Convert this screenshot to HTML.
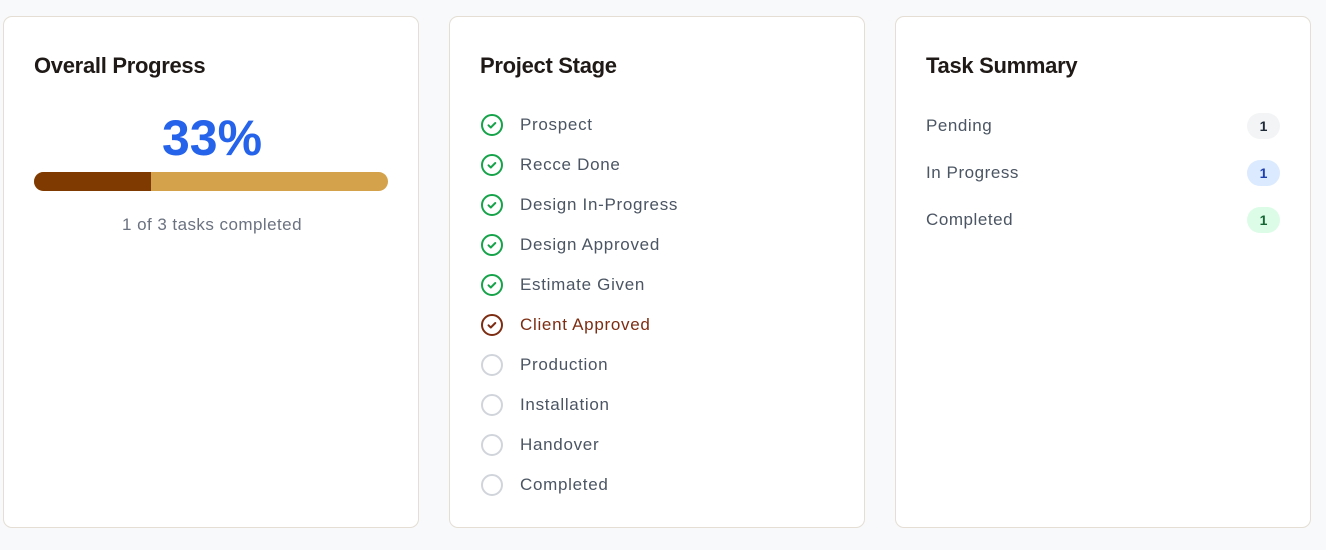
<!DOCTYPE html>
<html><head><style>
body{margin:0;width:1326px;height:550px;background:#f8f9fb;font-family:"Liberation Sans",sans-serif;position:relative;overflow:hidden}
.card{position:absolute;top:16px;width:416px;height:512px;background:#fff;border:1px solid #e4ded4;border-radius:9px;box-sizing:border-box}
.t{position:absolute;left:30px;top:36px;font-size:22px;font-weight:600;color:#1f1a17;letter-spacing:-0.3px}
.pct{position:absolute;left:0;width:416px;top:92px;text-align:center;font-size:50px;font-weight:700;color:#2563eb}
.bar{position:absolute;left:30px;top:155px;width:354px;height:19px;border-radius:10px;background:#d4a24a;overflow:hidden}
.bar div{width:117px;height:100%;background:#7f3a02}
.sub{position:absolute;left:0;width:416px;top:198px;text-align:center;font-size:17px;color:#6b7280;letter-spacing:0.45px}
.row{position:absolute;left:30px;height:24px;display:flex;align-items:center;font-size:17px;color:#4b5563;letter-spacing:0.7px}
.row svg{margin-right:16px}
.tr{position:absolute;left:30px;right:30px;display:flex;justify-content:space-between;align-items:center;font-size:17px;color:#4b5563;letter-spacing:0.55px}
.b{width:33px;height:26px;border-radius:13px;display:flex;align-items:center;justify-content:center;font-size:14px;font-weight:700;letter-spacing:0}
</style></head><body>
<div class="card" style="left:3px">
<div class="t">Overall Progress</div>
<div class="pct">33%</div>
<div class="bar"><div></div></div>
<div class="sub">1 of 3 tasks completed</div>
</div>
<div class="card" style="left:449px">
<div class="t">Project Stage</div>
<div class="row" style="top:96px"><svg width="24" height="24" viewBox="0 0 24 24"><circle cx="12" cy="12" r="10" fill="none" stroke="#16a34a" stroke-width="2"/><path d="M8.5 12.3l2.3 2.2 4.5-4.5" fill="none" stroke="#16a34a" stroke-width="2" stroke-linecap="round" stroke-linejoin="round"/></svg>Prospect</div>
<div class="row" style="top:136px"><svg width="24" height="24" viewBox="0 0 24 24"><circle cx="12" cy="12" r="10" fill="none" stroke="#16a34a" stroke-width="2"/><path d="M8.5 12.3l2.3 2.2 4.5-4.5" fill="none" stroke="#16a34a" stroke-width="2" stroke-linecap="round" stroke-linejoin="round"/></svg>Recce Done</div>
<div class="row" style="top:176px"><svg width="24" height="24" viewBox="0 0 24 24"><circle cx="12" cy="12" r="10" fill="none" stroke="#16a34a" stroke-width="2"/><path d="M8.5 12.3l2.3 2.2 4.5-4.5" fill="none" stroke="#16a34a" stroke-width="2" stroke-linecap="round" stroke-linejoin="round"/></svg>Design In-Progress</div>
<div class="row" style="top:216px"><svg width="24" height="24" viewBox="0 0 24 24"><circle cx="12" cy="12" r="10" fill="none" stroke="#16a34a" stroke-width="2"/><path d="M8.5 12.3l2.3 2.2 4.5-4.5" fill="none" stroke="#16a34a" stroke-width="2" stroke-linecap="round" stroke-linejoin="round"/></svg>Design Approved</div>
<div class="row" style="top:256px"><svg width="24" height="24" viewBox="0 0 24 24"><circle cx="12" cy="12" r="10" fill="none" stroke="#16a34a" stroke-width="2"/><path d="M8.5 12.3l2.3 2.2 4.5-4.5" fill="none" stroke="#16a34a" stroke-width="2" stroke-linecap="round" stroke-linejoin="round"/></svg>Estimate Given</div>
<div class="row" style="top:296px;color:#7c2d12"><svg width="24" height="24" viewBox="0 0 24 24"><circle cx="12" cy="12" r="10" fill="none" stroke="#7c2d12" stroke-width="2"/><path d="M8.5 12.3l2.3 2.2 4.5-4.5" fill="none" stroke="#7c2d12" stroke-width="2" stroke-linecap="round" stroke-linejoin="round"/></svg>Client Approved</div>
<div class="row" style="top:336px"><svg width="24" height="24" viewBox="0 0 24 24"><circle cx="12" cy="12" r="10" fill="none" stroke="#d1d5db" stroke-width="2"/></svg>Production</div>
<div class="row" style="top:376px"><svg width="24" height="24" viewBox="0 0 24 24"><circle cx="12" cy="12" r="10" fill="none" stroke="#d1d5db" stroke-width="2"/></svg>Installation</div>
<div class="row" style="top:416px"><svg width="24" height="24" viewBox="0 0 24 24"><circle cx="12" cy="12" r="10" fill="none" stroke="#d1d5db" stroke-width="2"/></svg>Handover</div>
<div class="row" style="top:456px"><svg width="24" height="24" viewBox="0 0 24 24"><circle cx="12" cy="12" r="10" fill="none" stroke="#d1d5db" stroke-width="2"/></svg>Completed</div>
</div>
<div class="card" style="left:895px">
<div class="t">Task Summary</div>
<div class="tr" style="top:96px"><span>Pending</span><span class="b" style="background:#f3f4f6;color:#1f2937">1</span></div>
<div class="tr" style="top:143px"><span>In Progress</span><span class="b" style="background:#dbeafe;color:#1e40af">1</span></div>
<div class="tr" style="top:190px"><span>Completed</span><span class="b" style="background:#dcfce7;color:#166534">1</span></div>
</div>
</body></html>
